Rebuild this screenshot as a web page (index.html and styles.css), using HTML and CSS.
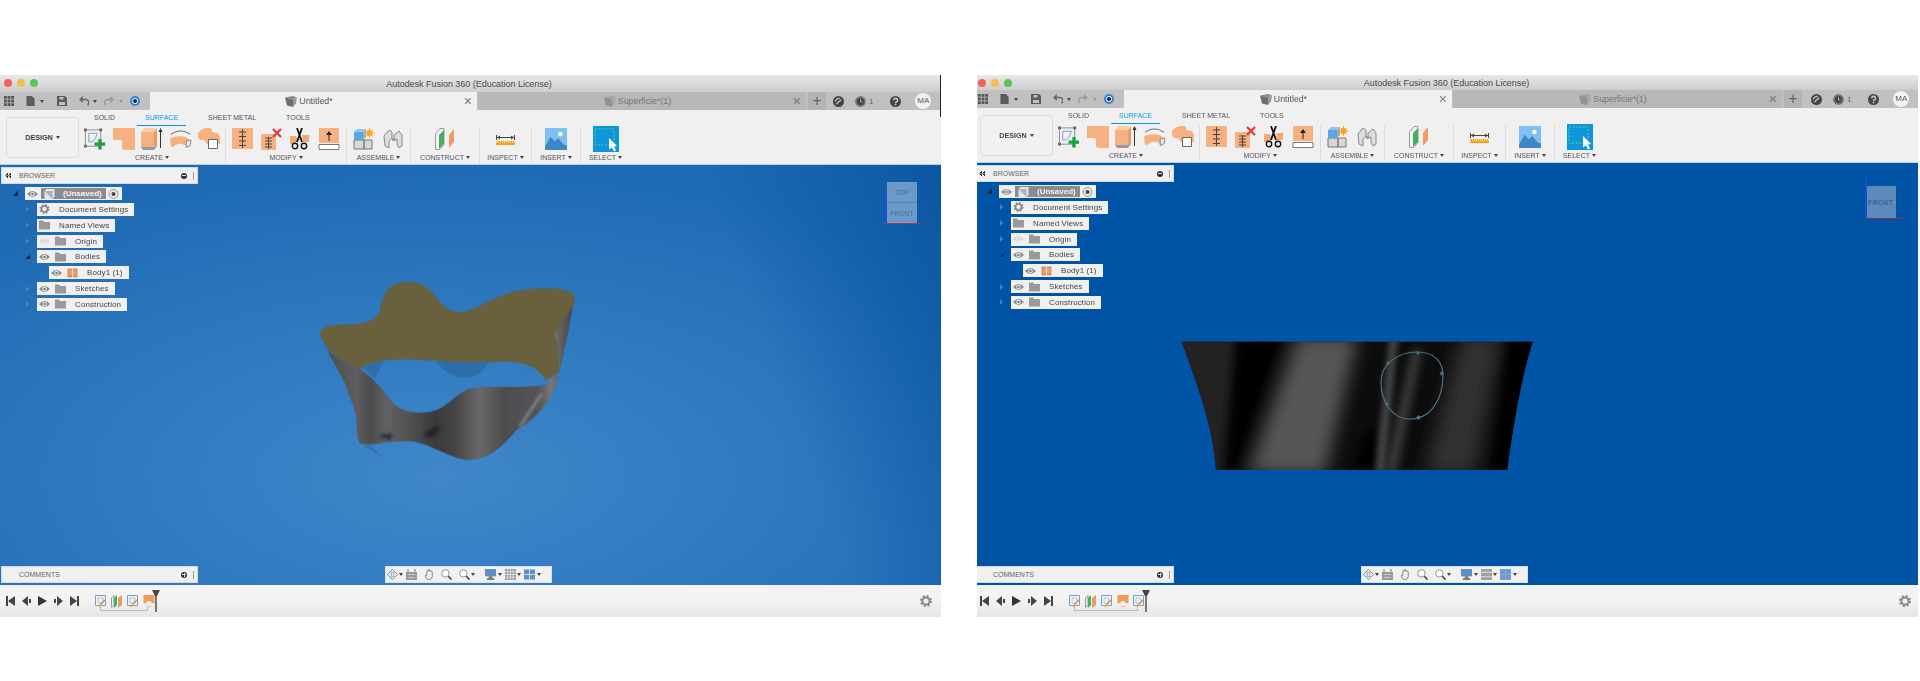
FILE: index.html
```html
<!DOCTYPE html>
<html lang="en">
<head>
<meta charset="utf-8">
<title>Autodesk Fusion 360</title>
<link rel="stylesheet" href="styles.css">
</head>
<body>
<svg class="sprite" aria-hidden="true">
  <symbol id="grid" viewBox="0 0 10 10"><path fill="#555" d="M0 0h2.800v2.800H0zM3.600 0h2.800v2.800H3.600zM7.200 0H10v2.800H7.200zM0 3.600h2.800v2.800H0zM3.600 3.600h2.800v2.800H3.600zM7.200 3.600H10v2.800H7.200zM0 7.200h2.800V10H0zM3.600 7.200h2.800V10H3.600zM7.200 7.200H10V10H7.200z"/></symbol>
  <symbol id="file" viewBox="0 0 10 11"><path fill="#5c5c5c" d="M0 0h6l3 3v8H0z"/></symbol>
  <symbol id="save" viewBox="0 0 10 10"><path fill="#5c5c5c" d="M0 0h8l2 2v8H0z"/><path fill="#c0c0c0" d="M2.500 1h4v2.500h-4zM2 6h6v3H2z"/></symbol>
  <symbol id="undo" viewBox="0 0 10 10"><path fill="none" stroke="#666" stroke-width="1.600" d="M2 3.500h4.500a3 3 0 0 1 2 5.500"/><path fill="#666" d="M3.800 0v7L0 3.500z"/></symbol>
  <symbol id="redo" viewBox="0 0 10 10"><path fill="none" stroke="#999" stroke-width="1.400" d="M8 3.500H4a3 3 0 0 0-2 5.500"/><path fill="#999" d="M6.200 0v7L10 3.500z"/></symbol>
  <symbol id="capture" viewBox="0 0 10 10"><circle cx="5" cy="5" r="5" fill="#2d86dd"/><circle cx="5" cy="5" r="2.900" fill="#eee"/><circle cx="5" cy="5" r="2" fill="#222"/></symbol>
  <symbol id="cube" viewBox="0 0 12 11"><path fill="#8a8a8a" d="M0 1.500 8 0l4 1.500L8 3.500z"/><path fill="#6e6e6e" d="M0 1.500 8 3.500V11L2 9.500z"/><path fill="#9a9a9a" d="m8 3.500 4-2-1 6-3 3.500z"/></symbol>
  <symbol id="clock" viewBox="0 0 10 10"><circle cx="5" cy="5" r="5" fill="#444"/><path fill="none" stroke="#c0c0c0" stroke-width="1.300" d="M7.500 3.500 5 5.500 3 7.500M2.200 5a3 3 0 0 1 4-2.600"/></symbol>
  <symbol id="jobs" viewBox="0 0 11 11"><circle cx="5.500" cy="5.500" r="5.400" fill="#777"/><circle cx="5.500" cy="5.500" r="3.600" fill="#444"/><path stroke="#aaa" d="M5.500 3v3h2" fill="none"/></symbol>
  <symbol id="help" viewBox="0 0 10 10"><circle cx="5" cy="5" r="5" fill="#444"/><path fill="none" stroke="#c8c8c8" stroke-width="1.400" d="M3.300 3.800a1.800 1.700 0 1 1 2.500 1.600C5.200 5.700 5 6 5 6.600"/><path fill="#c8c8c8" d="M4.300 7.200h1.400v1.300H4.300z"/></symbol>
  <symbol id="sketch" viewBox="0 0 23 22"><path fill="none" stroke="#8a8a8a" d="M1.500 1.500h16v17h-16z"/><path fill="#666" d="M0 0h3v3H0zM16 0h3v3h-3zM0 17h3v3H0z"/><path fill="none" stroke="#7aa0c8" d="M5 5h9l-2 5-3 4H5z"/><path fill="#15a13c" d="M15 11h3.400v3.600H22V18h-3.600v4H15v-4h-4v-3.400h4z"/></symbol>
  <symbol id="surf" viewBox="0 0 22 22"><path fill="#f7b080" d="M0 0h22v22H12q-3 0-3-3v-5q0-2-2-2H0z"/></symbol>
  <symbol id="extrude" viewBox="0 0 22 22"><path fill="#f7b080" d="M0 4h13v15H0z"/><path fill="#e59c68" d="m13 4 3-4v16l-3 3z"/><path fill="#fbd0ae" d="M0 4 3 0h13l-3 4z"/><path fill="#9a9a9a" d="M0 19h13l3-3v2l-3 4H2z"/><path stroke="#333" fill="none" d="M19.500 20V1"/><path fill="#333" d="m19.500 0 2 4h-4z"/></symbol>
  <symbol id="sweep" viewBox="0 0 23 22"><path fill="none" stroke="#666" d="M1 6q10-7 20 0"/><path fill="#f7b080" d="M0 11q2-3 11-3 7 0 9 4l-3 7q-2-3-6-3-5 0-7 3H1z"/><path fill="#e8e8e8" stroke="#888" d="m17 13 5-1-1 6-4 2z"/></symbol>
  <symbol id="patch" viewBox="0 0 22 22"><path fill="#f7b080" d="M0 5q3-4 8-5h4q3 1 2 4l6 1 2 4v7H9l-3-4q-5 1-6-3z"/><path fill="#fff" stroke="#666" d="M10.500 11.500h9v9h-9z"/></symbol>
  <symbol id="stitch" viewBox="0 0 22 22"><path fill="#f7b080" d="M0 0h21v21H0z"/><path stroke="#444" d="M10.500 1v19M7 4h7M7 8.500h7M7 13h7M7 17.500h7" fill="none"/></symbol>
  <symbol id="unstitch" viewBox="0 0 22 22"><path fill="#f7b080" d="M0 6h15v16H0z"/><path stroke="#444" d="M4 10h7M4 13h7M4 16h7M4 19h7M7.500 9v12" fill="none"/><path stroke="#e8392f" stroke-width="2.200" d="m12 1 8 8m0-8-8 8"/></symbol>
  <symbol id="scissors" viewBox="0 0 20 22"><path fill="#f3a878" d="M0 8h6l2 4-3 4H0zM12 7h7v7h-6z"/><path stroke="#111" stroke-width="1.800" d="m7 0 5 14M12 0 7 14" fill="none"/><circle cx="5" cy="18" r="2.700" fill="#eee" stroke="#111" stroke-width="1.400"/><circle cx="14" cy="18" r="2.700" fill="#eee" stroke="#111" stroke-width="1.400"/></symbol>
  <symbol id="offset" viewBox="0 0 22 22"><path fill="#f7b080" d="M1 0h20v15H1z"/><path fill="#fff" stroke="#777" d="M1 16.500h20v5H1z"/><path stroke="#222" d="M11 13V5" fill="none"/><path fill="#222" d="m11 3 3 4H8z"/></symbol>
  <symbol id="assemble" viewBox="0 0 22 22"><path fill="#d8d8d8" stroke="#777" d="M1 12h10v9H1zM11 12h8v9h-8z"/><path fill="#5aa6e6" d="M1 4h9v8H1z"/><path fill="#8cc4f0" d="m1 4 3-3h9l-3 3z"/><path fill="#aaa" d="m10 4 3-3v8l-3 3z"/><circle cx="16.500" cy="5" r="3" fill="#f5a623"/><path stroke="#f5a623" d="M16.500 0v10M11.500 5h10M13 1.500l7 7M20 1.500l-7 7" fill="none"/></symbol>
  <symbol id="joint" viewBox="0 0 20 22"><path fill="#ddd" stroke="#888" d="M1 8 6 2l3 2v6l-3 3v7l-4-2z"/><path fill="#ddd" stroke="#888" d="m11 7 5-4 3 4v11l-3 2-2-4v-5l-3 1z"/><path fill="#7aa6d4" d="M9 10h3v3H9z"/></symbol>
  <symbol id="plane" viewBox="0 0 20 22"><path fill="#f4f4f4" stroke="#999" d="M.5 6 5 .5h4v16L4.500 21.500H.5z"/><path fill="#46b060" d="M4 7 9 2v14l-5 5z"/><path fill="#ee9c62" d="m14 7 5-6v13l-5 6z"/></symbol>
  <symbol id="measure" viewBox="0 0 19 11"><path fill="none" stroke="#444" d="M.5 1v5M18.500 1v5M1 3.500h17"/><path fill="#444" d="m1 3.500 3-2v4zM18 3.500l-3-2v4z"/><path fill="#f5a31a" d="M0 7h19v4H0z"/><path stroke="#fff" stroke-dasharray="1 1" d="M0 8h19" fill="none"/></symbol>
  <symbol id="image" viewBox="0 0 20 20"><path fill="#7cc0f5" d="M0 0h20v20H0z"/><circle cx="14" cy="5.500" r="2.200" fill="#fff3c4"/><path fill="#3f87c4" d="m0 17 5-9 4 4 3-3 5 6 3 1v4H0z"/></symbol>
  <symbol id="select" viewBox="0 0 26 26"><path fill="#0c96dc" d="M0 0h26v26H0z"/><path fill="none" stroke="#7fd67a" stroke-width=".8" stroke-dasharray="2 1.500" d="M2 3h19v16H2z"/><path fill="#fff" d="m16 12 8 8-3 .5 2 4-2 1-2-4-3 2z"/></symbol>
  <symbol id="eye" viewBox="0 0 11 7"><path fill="#8c8c8c" d="M0 3.500Q5.500-2.500 11 3.500 5.500 9.500 0 3.500z"/><circle cx="5.500" cy="3.500" r="2.200" fill="#f0f0f0"/><circle cx="5.500" cy="3.500" r="1.200" fill="#777"/></symbol>
  <symbol id="folder" viewBox="0 0 11 9"><path fill="#9a9a9a" d="M0 0h4l1 1.500h6V9H0z"/></symbol>
  <symbol id="gear" viewBox="0 0 12 12"><circle cx="6" cy="6" r="3.600" fill="none" stroke="#888" stroke-width="2"/><circle cx="6" cy="6" r="5" fill="none" stroke="#888" stroke-width="2" stroke-dasharray="2 1.930"/></symbol>
  <symbol id="doc" viewBox="0 0 10 10"><path fill="#dfe6ee" d="M2 0h8v8l-2 2H0V2z"/><path fill="#aab4bf" d="M0 2h8v8"/></symbol>
  <symbol id="radio" viewBox="0 0 10 10"><circle cx="5" cy="5" r="4.500" fill="#e8e8e8" stroke="#999"/><circle cx="5" cy="5" r="2" fill="#444"/></symbol>
  <symbol id="body" viewBox="0 0 11 11"><path fill="#f19c5e" stroke="#a7693e" stroke-width=".6" d="M.5 1h4v9h-4zM6.500 1h4v9h-4z"/><path fill="#ffd2ae" d="M4.500 3h2v4h-2z"/></symbol>
  <symbol id="home" viewBox="0 0 13 13"><path fill="#f4f4f4" stroke="#777" d="m6.500.5 6 6-6 6-6-6z"/><path fill="none" stroke="#6c97c2" d="M5 4h3v5H5z"/></symbol>
  <symbol id="orbit" viewBox="0 0 11 11"><path fill="#999" d="M0 3h11v8H0z"/><path fill="#ccc" d="M2 5h7v1H2zM2 8h7v1H2z"/><path fill="none" stroke="#777" d="M2 3V0M9 3V0"/></symbol>
  <symbol id="hand" viewBox="0 0 11 12"><path fill="#eee" stroke="#666" stroke-width=".8" d="M2.500 7V2.500a.8.8 0 0 1 1.500 0V1a.8.8 0 0 1 1.500 0v1a.8.8 0 0 1 1.500 0v1a.8.8 0 0 1 1.500 0v5q0 3-3 3.500H4Q2 11 .8 7.500q.5-1.500 1.700-.5z"/></symbol>
  <symbol id="zoom" viewBox="0 0 12 12"><circle cx="4.800" cy="4.800" r="4" fill="#fff" stroke="#888"/><path stroke="#333" stroke-width="1.600" d="m8 8 3.500 3.500"/></symbol>
  <symbol id="display" viewBox="0 0 12 12"><path fill="#5f8fc6" d="M0 0h12v8H0z"/><path fill="#777" d="M4 8h4v2h2v2H2v-2h2z"/></symbol>
  <symbol id="gridv" viewBox="0 0 12 12"><path fill="#9a9a9a" d="M0 0h12v12H0z"/><path stroke="#ddd" d="M0 3h12M0 6h12M0 9h12M3 0v12M6 0v12M9 0v12"/></symbol>
  <symbol id="gridb" viewBox="0 0 12 12"><path fill="#a0a0a0" d="M0 0h12v12H0z"/><path fill="#dedede" d="M0 3h12v1H0zM0 8h12v1H0z"/></symbol>
  <symbol id="views" viewBox="0 0 12 11"><path fill="#5f8fc6" d="M0 0h12v11H0z"/><path stroke="#d8e4f0" d="M0 5.500h12M6 0v11"/></symbol>
  <symbol id="views2" viewBox="0 0 12 12"><path fill="#6f9bd0" d="M0 0h12v12H0z"/><path stroke="#86aedb" d="M0 6h12M6 0v12"/></symbol>
  <symbol id="first" viewBox="0 0 9 10"><path fill="#444" d="M0 0h2v10H0zM9 0v10L2 5z"/></symbol>
  <symbol id="prev" viewBox="0 0 9 10"><path fill="#444" d="M6 0v10L0 5zM7 3h2v4H7z"/></symbol>
  <symbol id="play" viewBox="0 0 9 10"><path fill="#333" d="M0 0l9 5-9 5z"/></symbol>
  <symbol id="next" viewBox="0 0 9 10"><path fill="#444" d="M3 0v10l6-5zM0 3h2v4H0z"/></symbol>
  <symbol id="last" viewBox="0 0 9 10"><path fill="#444" d="M7 0h2v10H7zM0 0v10l7-5z"/></symbol>
  <symbol id="tlsketch" viewBox="0 0 12 13"><path fill="#eef3f8" stroke="#7b9fc4" d="M.5.500h10v10H.5z"/><path fill="none" stroke="#8fb0d2" stroke-width=".7" d="M3 3h5v5H3z"/><path stroke="#e88a3a" stroke-width="1.600" d="m5 10 5-5"/><path stroke="#d8c020" stroke-width="1.200" d="m4 12 2-2"/></symbol>
  <symbol id="tlplane" viewBox="0 0 12 13"><path fill="#eee" stroke="#999" d="M.5 3 3 .5v10L.5 12.500z"/><path fill="#46b060" d="m3 3 3-3v10l-3 3z"/><path fill="#ee9c62" d="m7 3 4-3v10l-4 3z"/></symbol>
  <symbol id="tlsurf" viewBox="0 0 12 14"><path fill="#f19c5e" d="M0 0h12v9H9l-1 4H4L3 9H0z"/><circle cx="6" cy="9.500" r="3" fill="#eee"/></symbol>
  <symbol id="marker" viewBox="0 0 8 22"><path fill="#444" d="M0 0h8L5 6H3z"/><path fill="#444" d="M3.300 5h1.400v17H3.300z"/></symbol>
</svg>

<main class="desk">
  <section class="window window-a">
    <header class="titlebar">
      <span class="lights"><i class="light red"></i><i class="light amber"></i><i class="light green"></i></span>
      <span class="title">Autodesk Fusion 360 (Education License)</span>
    </header>
    <nav class="tabbar">
      <div class="qat">
        <svg class="q grid"><use href="#grid"/></svg>
        <svg class="q file"><use href="#file"/></svg><i class="caret q-caret"></i>
        <svg class="q save"><use href="#save"/></svg>
        <svg class="q undo"><use href="#undo"/></svg><i class="caret q-caret"></i>
        <svg class="q redo"><use href="#redo"/></svg><i class="caret q-caret faint"></i>
        <svg class="q capture"><use href="#capture"/></svg>
      </div>
      <div class="tab active"><span class="tab-name"><svg class="tab-cube"><use href="#cube"/></svg>Untitled*</span><span class="close">×</span></div>
      <div class="tab"><span class="tab-name"><svg class="tab-cube faded"><use href="#cube"/></svg>Superficie*(1)</span><span class="close">×</span></div>
      <div class="plus">+</div>
      <div class="account">
        <svg class="acc clock"><use href="#clock"/></svg>
        <svg class="acc jobs"><use href="#jobs"/></svg><span class="job-count">1</span>
        <svg class="acc help"><use href="#help"/></svg>
        <span class="avatar">MA</span>
      </div>
    </nav>
    <div class="toolbar">
      <button class="design">DESIGN<i class="caret"></i></button>
      <div class="ribbon">
        <div class="ribbon-tabs"><span class="rtab">SOLID</span><span class="rtab current">SURFACE</span><span class="rtab">SHEET METAL</span><span class="rtab">TOOLS</span></div>
        <div class="groups">
          <div class="group g-create"><div class="tools"><svg class="tool"><use href="#sketch"/></svg><svg class="tool"><use href="#surf"/></svg><svg class="tool"><use href="#extrude"/></svg><svg class="tool"><use href="#sweep"/></svg><svg class="tool"><use href="#patch"/></svg></div><span class="glabel">CREATE<i class="caret"></i></span></div>
          <div class="group g-modify"><div class="tools"><svg class="tool"><use href="#stitch"/></svg><svg class="tool"><use href="#unstitch"/></svg><svg class="tool"><use href="#scissors"/></svg><svg class="tool"><use href="#offset"/></svg></div><span class="glabel">MODIFY<i class="caret"></i></span></div>
          <div class="group g-assemble"><div class="tools"><svg class="tool"><use href="#assemble"/></svg><svg class="tool"><use href="#joint"/></svg></div><span class="glabel">ASSEMBLE<i class="caret"></i></span></div>
          <div class="group g-construct"><div class="tools"><svg class="tool"><use href="#plane"/></svg></div><span class="glabel">CONSTRUCT<i class="caret"></i></span></div>
          <div class="group g-inspect"><div class="tools"><svg class="tool small"><use href="#measure"/></svg></div><span class="glabel">INSPECT<i class="caret"></i></span></div>
          <div class="group g-insert"><div class="tools"><svg class="tool"><use href="#image"/></svg></div><span class="glabel">INSERT<i class="caret"></i></span></div>
          <div class="group g-select"><div class="tools"><svg class="tool big"><use href="#select"/></svg></div><span class="glabel">SELECT<i class="caret"></i></span></div>
        </div>
      </div>
    </div>
    <div class="canvas canvas-a">
      <svg class="scene" viewBox="0 165 938 420" preserveAspectRatio="none">
        <defs>
          <linearGradient id="band" x1="0" x2="1" y1="0" y2="0">
            <stop offset="0" stop-color="#4e4e50"/><stop offset=".12" stop-color="#5e5e60"/><stop offset=".18" stop-color="#4c4c4e"/><stop offset=".24" stop-color="#626264"/><stop offset=".34" stop-color="#505052"/><stop offset=".44" stop-color="#3a3a3c"/><stop offset=".52" stop-color="#444446"/><stop offset=".62" stop-color="#68686a"/><stop offset=".72" stop-color="#4e4e50"/><stop offset=".86" stop-color="#545456"/><stop offset=".91" stop-color="#78787a"/><stop offset="1" stop-color="#454547"/>
          </linearGradient>
          <filter id="soft" x="-30%" y="-30%" width="160%" height="160%"><feGaussianBlur stdDeviation="5"/></filter>
          <filter id="edge" x="-5%" y="-5%" width="110%" height="110%"><feGaussianBlur stdDeviation="1"/></filter>
        </defs>
        <g transform="translate(300 260) scale(.3333)" filter="url(#edge)">
          <path fill="#2f6ea8" d="M190 322q30-15 60-18l-25 52zM408 304h160q-30 50-70 48-50 2-90-48z"/>
          <path fill="#3674ae" d="M205 555q25 15 45 40-25-20-60-35z"/>
          <path fill="#69603c" d="M60 222C62 200 90 194 130 194 190 192 225 190 240 150 250 100 265 68 320 65 375 65 395 95 420 125 445 155 470 162 510 150 570 128 590 100 680 88 740 82 815 80 825 112 825 150 790 190 775 240L778 335 738 362C720 330 690 312 640 306 570 305 500 306 440 305 380 300 330 296 270 300 225 304 195 312 180 328 140 310 85 290 60 222z"/>
          <path fill="url(#band)" d="M80 265C100 290 140 310 180 328 225 355 255 400 285 435 310 458 380 470 430 440 470 410 490 385 530 382 590 378 690 385 735 375L778 335C782 300 775 260 762 218 785 195 805 165 818 135 810 200 790 290 770 370 745 440 700 480 650 510 600 570 560 600 500 600 440 590 400 555 340 545 290 538 220 558 185 552 170 550 172 520 170 490 170 450 150 420 135 370 115 330 95 300 80 265z"/>
          <g filter="url(#soft)"><path fill="#222224" opacity=".8" d="M235 530q25-15 45-5l-10 15zM370 525q25-30 50-25-5 25-30 35z"/><path stroke="#9a9a9c" stroke-width="6" fill="none" d="M660 500 725 400"/></g>
        </g>
      </svg>
      <div class="panel"><i class="dbl"></i><span class="panel-name">BROWSER</span><i class="minus"></i><i class="grip"></i></div>
      <ul class="tree">
        <li class="node root"><i class="arrow open"></i><div class="chip"><svg class="nic"><use href="#eye"/></svg><span class="root-name"><svg class="nic"><use href="#doc"/></svg><span>(Unsaved)</span></span><svg class="nic"><use href="#radio"/></svg></div></li>
        <li class="node"><i class="arrow"></i><div class="chip"><svg class="nic"><use href="#gear"/></svg><span class="ntext">Document Settings</span></div></li>
        <li class="node"><i class="arrow"></i><div class="chip"><svg class="nic"><use href="#folder"/></svg><span class="ntext">Named Views</span></div></li>
        <li class="node"><i class="arrow"></i><div class="chip"><svg class="nic hidden-eye"><use href="#eye"/></svg><svg class="nic"><use href="#folder"/></svg><span class="ntext">Origin</span></div></li>
        <li class="node"><i class="arrow open"></i><div class="chip"><svg class="nic"><use href="#eye"/></svg><svg class="nic"><use href="#folder"/></svg><span class="ntext">Bodies</span></div></li>
        <li class="node child"><div class="chip"><svg class="nic"><use href="#eye"/></svg><svg class="nic"><use href="#body"/></svg><span class="ntext">Body1 (1)</span></div></li>
        <li class="node"><i class="arrow"></i><div class="chip"><svg class="nic"><use href="#eye"/></svg><svg class="nic"><use href="#folder"/></svg><span class="ntext">Sketches</span></div></li>
        <li class="node"><i class="arrow"></i><div class="chip"><svg class="nic"><use href="#eye"/></svg><svg class="nic"><use href="#folder"/></svg><span class="ntext">Construction</span></div></li>
      </ul>
      <div class="panel comments"><span class="panel-name">COMMENTS</span><i class="minus add"></i><i class="grip"></i></div>
      <div class="viewcube vc-a"><span class="face">TOP</span><span class="face">FRONT</span><i class="axis-z"></i><i class="axis-x"></i></div>
      <div class="navbar nav-a">
        <svg class="nv"><use href="#home"/></svg><i class="caret"></i><svg class="nv"><use href="#orbit"/></svg><svg class="nv sp"><use href="#hand"/></svg><svg class="nv sp"><use href="#zoom"/></svg><svg class="nv sp"><use href="#zoom"/></svg><i class="caret"></i><svg class="nv wide"><use href="#display"/></svg><i class="caret"></i><svg class="nv"><use href="#gridv"/></svg><i class="caret"></i><svg class="nv"><use href="#views"/></svg><i class="caret"></i>
      </div>
    </div>
    <footer class="timeline">
      <svg class="ctl"><use href="#first"/></svg><svg class="ctl"><use href="#prev"/></svg><svg class="ctl"><use href="#play"/></svg><svg class="ctl"><use href="#next"/></svg><svg class="ctl"><use href="#last"/></svg>
      <div class="steps"><svg class="step"><use href="#tlsketch"/></svg><svg class="step"><use href="#tlplane"/></svg><svg class="step"><use href="#tlsketch"/></svg><svg class="step"><use href="#tlsurf"/></svg><svg class="marker"><use href="#marker"/></svg></div>
      <svg class="tl-gear"><use href="#gear"/></svg>
    </footer>
  </section>

  <section class="window window-b">
    <header class="titlebar">
      <span class="lights"><i class="light red"></i><i class="light amber"></i><i class="light green"></i></span>
      <span class="title">Autodesk Fusion 360 (Education License)</span>
    </header>
    <nav class="tabbar">
      <div class="qat">
        <svg class="q grid"><use href="#grid"/></svg>
        <svg class="q file"><use href="#file"/></svg><i class="caret q-caret"></i>
        <svg class="q save"><use href="#save"/></svg>
        <svg class="q undo"><use href="#undo"/></svg><i class="caret q-caret"></i>
        <svg class="q redo"><use href="#redo"/></svg><i class="caret q-caret faint"></i>
        <svg class="q capture"><use href="#capture"/></svg>
      </div>
      <div class="tab active"><span class="tab-name"><svg class="tab-cube"><use href="#cube"/></svg>Untitled*</span><span class="close">×</span></div>
      <div class="tab"><span class="tab-name"><svg class="tab-cube faded"><use href="#cube"/></svg>Superficie*(1)</span><span class="close">×</span></div>
      <div class="plus">+</div>
      <div class="account">
        <svg class="acc clock"><use href="#clock"/></svg>
        <svg class="acc jobs"><use href="#jobs"/></svg><span class="job-count">1</span>
        <svg class="acc help"><use href="#help"/></svg>
        <span class="avatar">MA</span>
      </div>
    </nav>
    <div class="toolbar">
      <button class="design">DESIGN<i class="caret"></i></button>
      <div class="ribbon">
        <div class="ribbon-tabs"><span class="rtab">SOLID</span><span class="rtab current">SURFACE</span><span class="rtab">SHEET METAL</span><span class="rtab">TOOLS</span></div>
        <div class="groups">
          <div class="group g-create"><div class="tools"><svg class="tool"><use href="#sketch"/></svg><svg class="tool"><use href="#surf"/></svg><svg class="tool"><use href="#extrude"/></svg><svg class="tool"><use href="#sweep"/></svg><svg class="tool"><use href="#patch"/></svg></div><span class="glabel">CREATE<i class="caret"></i></span></div>
          <div class="group g-modify"><div class="tools"><svg class="tool"><use href="#stitch"/></svg><svg class="tool"><use href="#unstitch"/></svg><svg class="tool"><use href="#scissors"/></svg><svg class="tool"><use href="#offset"/></svg></div><span class="glabel">MODIFY<i class="caret"></i></span></div>
          <div class="group g-assemble"><div class="tools"><svg class="tool"><use href="#assemble"/></svg><svg class="tool"><use href="#joint"/></svg></div><span class="glabel">ASSEMBLE<i class="caret"></i></span></div>
          <div class="group g-construct"><div class="tools"><svg class="tool"><use href="#plane"/></svg></div><span class="glabel">CONSTRUCT<i class="caret"></i></span></div>
          <div class="group g-inspect"><div class="tools"><svg class="tool small"><use href="#measure"/></svg></div><span class="glabel">INSPECT<i class="caret"></i></span></div>
          <div class="group g-insert"><div class="tools"><svg class="tool"><use href="#image"/></svg></div><span class="glabel">INSERT<i class="caret"></i></span></div>
          <div class="group g-select"><div class="tools"><svg class="tool big"><use href="#select"/></svg></div><span class="glabel">SELECT<i class="caret"></i></span></div>
        </div>
      </div>
    </div>
    <div class="canvas canvas-b">
      <svg class="scene" viewBox="971 163 947 422" preserveAspectRatio="none">
        <defs>
          <clipPath id="trap"><path d="M1181.700 341.700H1532.700C1522 375 1513 425 1507.300 470H1216C1213 430 1203 400 1181.700 341.700z"/></clipPath>
          <filter id="b4" x="-50%" width="200%"><feGaussianBlur stdDeviation="4"/></filter>
          <filter id="b8" x="-50%" width="200%"><feGaussianBlur stdDeviation="9"/></filter>
          <filter id="b2" x="-100%" width="300%"><feGaussianBlur stdDeviation="3"/></filter>
        </defs>
        <g clip-path="url(#trap)">
          <path fill="#0c0c0c" d="M1170 330h380v150h-380z"/>
          <path fill="#232323" filter="url(#b4)" d="M1175 335h60l-14 140h-25z"/>
          <path fill="#000" filter="url(#b4)" d="M1240 335h42l-46 140h-8z"/>
          <path fill="#575757" filter="url(#b8)" d="M1298 335h60l-33 140h-78z"/>
          <path fill="#000" filter="url(#b4)" d="M1362 440q8-20 14-6l6 42h-30z"/>
          <path fill="#484848" filter="url(#b2)" d="M1390 335h8l-14 140h-9z"/>
          <path fill="#3a3a3a" filter="url(#b4)" d="M1412 350h10l-26 125h-12z"/>
          <path fill="#333" filter="url(#b8)" d="M1462 335h40l-28 140h-50z"/>
          <path fill="#000" filter="url(#b4)" d="M1510 335h30l-20 140h-30z"/>
          <path fill="none" stroke="#4d7083" stroke-width="1.200" d="M1418 352C1434 352 1443 362 1443 375 1443 398 1432 419 1410 419 1392 419 1381 402 1381 382 1381 365 1396 352 1418 352z"/>
          <path fill="#4d7083" d="M1417 351l3 2-2 2-2-2zM1441 371l3 2-2 3-2-2zM1418 415l3 2-2 3-3-2zM1387 402l2 2-2 2-2-2zM1388 361l2 2-2 2-2-2z"/>
        </g>
      </svg>
      <div class="panel"><i class="dbl"></i><span class="panel-name">BROWSER</span><i class="minus"></i><i class="grip"></i></div>
      <ul class="tree">
        <li class="node root"><i class="arrow open"></i><div class="chip"><svg class="nic"><use href="#eye"/></svg><span class="root-name"><svg class="nic"><use href="#doc"/></svg><span>(Unsaved)</span></span><svg class="nic"><use href="#radio"/></svg></div></li>
        <li class="node"><i class="arrow"></i><div class="chip"><svg class="nic"><use href="#gear"/></svg><span class="ntext">Document Settings</span></div></li>
        <li class="node"><i class="arrow"></i><div class="chip"><svg class="nic"><use href="#folder"/></svg><span class="ntext">Named Views</span></div></li>
        <li class="node"><i class="arrow"></i><div class="chip"><svg class="nic hidden-eye"><use href="#eye"/></svg><svg class="nic"><use href="#folder"/></svg><span class="ntext">Origin</span></div></li>
        <li class="node"><i class="arrow open"></i><div class="chip"><svg class="nic"><use href="#eye"/></svg><svg class="nic"><use href="#folder"/></svg><span class="ntext">Bodies</span></div></li>
        <li class="node child"><div class="chip"><svg class="nic"><use href="#eye"/></svg><svg class="nic"><use href="#body"/></svg><span class="ntext">Body1 (1)</span></div></li>
        <li class="node"><i class="arrow"></i><div class="chip"><svg class="nic"><use href="#eye"/></svg><svg class="nic"><use href="#folder"/></svg><span class="ntext">Sketches</span></div></li>
        <li class="node"><i class="arrow"></i><div class="chip"><svg class="nic"><use href="#eye"/></svg><svg class="nic"><use href="#folder"/></svg><span class="ntext">Construction</span></div></li>
      </ul>
      <div class="panel comments"><span class="panel-name">COMMENTS</span><i class="minus add"></i><i class="grip"></i></div>
      <div class="viewcube vc-b"><span class="face solo">FRONT</span><i class="axis-z"></i><i class="axis-x"></i></div>
      <div class="navbar nav-b">
        <svg class="nv"><use href="#home"/></svg><i class="caret"></i><svg class="nv"><use href="#orbit"/></svg><svg class="nv sp"><use href="#hand"/></svg><svg class="nv sp"><use href="#zoom"/></svg><svg class="nv sp"><use href="#zoom"/></svg><i class="caret"></i><svg class="nv wide"><use href="#display"/></svg><i class="caret"></i><svg class="nv"><use href="#gridb"/></svg><i class="caret"></i><svg class="nv"><use href="#views2"/></svg><i class="caret"></i>
      </div>
    </div>
    <footer class="timeline">
      <svg class="ctl"><use href="#first"/></svg><svg class="ctl"><use href="#prev"/></svg><svg class="ctl"><use href="#play"/></svg><svg class="ctl"><use href="#next"/></svg><svg class="ctl"><use href="#last"/></svg>
      <div class="steps five"><svg class="step"><use href="#tlsketch"/></svg><svg class="step"><use href="#tlplane"/></svg><svg class="step"><use href="#tlsketch"/></svg><svg class="step"><use href="#tlsurf"/></svg><svg class="step"><use href="#tlsketch"/></svg><svg class="marker"><use href="#marker"/></svg></div>
      <svg class="tl-gear"><use href="#gear"/></svg>
    </footer>
  </section>
</main>
</body>
</html>
```
FILE: styles.css
```css
* { box-sizing: border-box; }
html, body { margin: 0; height: 100%; }
body { background: #fff; overflow: hidden; font-family: "Liberation Sans", Arial, sans-serif; color: #444; }
i { display: block; font-style: normal; }
.sprite { position: absolute; width: 0; height: 0; }

.desk { display: flex; gap: 30px; height: 681px; padding-top: 75px; margin-left: -3px; }
.window { display: flex; flex-direction: column; height: 542px; flex: none; position: relative; }
.window-a { width: 944px; }
.window-b { width: 947px; clip-path: inset(0 0 0 6px); }
.window-a::after { content: ""; position: absolute; right: 0; top: 0; width: 1px; height: 42px; background: #222; }

.titlebar { display: flex; align-items: center; position: relative; justify-content: center; background: linear-gradient(#e8e8e8, #cdcdcd); flex: none; }
.window-a .titlebar { height: 17px; }
.window-b .titlebar { height: 15px; padding-left: 4px; }
.lights { position: absolute; left: 7px; top: 0; bottom: 0; display: flex; align-items: center; gap: 5px; }
.window-a .lights { top: -2px; bottom: auto; height: 19px; }
.light { width: 8px; height: 8px; border-radius: 50%; }
.red { background: #f0625a; }
.amber { background: #f5bc4f; }
.green { background: #5cc558; }
.title { font-size: 9px; letter-spacing: -.03px; color: #4a4a4a; }

.tabbar { display: flex; height: 18px; background: #c0c0c0; flex: none; align-items: stretch; }
.qat { width: 153px; flex: none; display: flex; align-items: center; padding-left: 7px; }
.q { width: 10px; height: 10px; flex: none; }
.file { margin-left: 12px; }
.save { margin-left: 13px; }
.undo { margin-left: 12px; }
.redo { margin-left: 7px; }
.capture { margin-left: 7px; }
.caret { width: 0; height: 0; border: 2.500px solid transparent; border-top: 3px solid #444; border-bottom: 0; display: inline-block; margin-left: 3px; vertical-align: 1px; flex: none; }
.q-caret { margin-left: 4px; }
.faint { border-top-color: #999; margin-left: 5px; }

.tab { width: 328px; flex: none; display: grid; grid-template-columns: 1fr auto; position: relative; align-items: center; justify-items: center; background: #b8b8b8; color: #777; font-size: 8.800px; padding-right: 9px; }
.tab.active { background: #f0f0f0; color: #555; width: 327px; margin-right: 1px; }
.window-b .tab { width: 329px; }
.window-b .tab.active { width: 328px; }
.tab-name { display: flex; align-items: center; gap: 2px; }
.tab-cube { width: 12px; height: 11px; }
.faded { opacity: .5; }
.close { position: absolute; right: 5px; top: 1px; font-size: 14px; line-height: 16px; color: #777; font-weight: 400; }
.plus { width: 18px; margin-left: 2px; background: #b4b4b4; color: #666; font-size: 16px; line-height: 17px; text-align: center; flex: none; }
.account { display: flex; align-items: center; padding-left: 7px; flex: 1; }
.window-b .account { padding-left: 9px; }
.acc { flex: none; }
.clock { width: 11px; height: 11px; }
.jobs { width: 11px; height: 11px; margin-left: 11px; }
.job-count { font-size: 8px; margin-left: 3px; color: #666; }
.help { width: 11px; height: 11px; margin-left: 17px; }
.avatar { width: 16px; height: 16px; margin-left: 14px; border-radius: 50%; background: #f2f2f2; font-size: 8px; letter-spacing: .2px; line-height: 16px; text-align: center; color: #555; flex: none; }

.toolbar { display: flex; background: #f0f0f0; flex: none; align-items: flex-start; border-bottom: 1px solid #b9cfe4; height: 55px; }
.design { margin: 7px 0 0 9px; width: 73px; height: 41px; border: 1px solid #dcdcdc; border-radius: 4px; background: #f1f1f1; color: #444; font: 700 7.200px "Liberation Sans", Arial, sans-serif; padding: 0; }
.ribbon { display: flex; flex-direction: column; }
.ribbon-tabs { display: flex; gap: 14px; padding-left: 7px; height: 16px; }
.rtab { font-size: 7px; padding: 4px 8px 0; height: 16px; color: #555; white-space: nowrap; }
.rtab.current { color: #1199dd; border-bottom: 1.500px solid #0696d7; }
.groups { display: flex; }
.group { display: flex; flex-direction: column; align-items: center; height: 36px; border-right: 1px solid #dcdcdc; margin-top: 1px; }
.g-create { width: 147px; }
.g-modify { width: 121px; }
.g-assemble { width: 64px; }
.g-construct { width: 69px; }
.g-inspect { width: 52px; }
.g-insert { width: 49px; }
.g-select { width: 49px; border-right: 0; }
.tools { display: flex; gap: 6.500px; height: 24px; align-items: center; flex: none; }
.tool { width: 22px; height: 22px; }
.tool.small { width: 19px; height: 11px; }
.tool.big { width: 26px; height: 26px; }
.glabel { font-size: 7px; color: #555; margin-top: 1px; white-space: nowrap; line-height: 11px; }
.glabel .caret { margin-left: 2px; }

.canvas { flex: 1; position: relative; display: flex; flex-direction: column; padding: 2px 0 2px 4px; overflow: hidden; }
.canvas-a { background: radial-gradient(ellipse 72% 75% at 47% 74%, #3f87ca 0, #2f79bf 50%, #1e6ab3 100%), #1e6ab3; }
.canvas-a::before { content: ""; position: absolute; inset: 0; background: linear-gradient(250deg, #0c57a3 0, rgba(12, 87, 163, 0) 22%); }
.canvas-b { background: #0054a6; }
.scene { position: absolute; inset: 0; width: 100%; height: 100%; }
.canvas-a .scene { left: 3px; width: 938px; }

.panel { position: relative; flex: none; display: flex; align-items: center; width: 197px; height: 17px; background: #f0f0f0; border: 1px solid #cfdbe8; font-size: 7px; color: #555; padding: 0 3px; }
.canvas-b .panel { width: 199px; }
.dbl { width: 6px; height: 5px; background: linear-gradient(135deg, transparent 50%, #333 50%) 0 0/3px 2.500px no-repeat, linear-gradient(45deg, transparent 50%, #333 50%) 0 100%/3px 2.500px no-repeat, linear-gradient(135deg, transparent 50%, #333 50%) 3px 0/3px 2.500px no-repeat, linear-gradient(45deg, transparent 50%, #333 50%) 3px 100%/3px 2.500px no-repeat; }
.panel-name { margin-left: 8px; color: #666; }
.comments .panel-name { margin-left: 14px; }
.minus { margin-left: auto; width: 6px; height: 6px; border-radius: 50%; background: #333; position: relative; }
.minus::after { content: ""; position: absolute; left: 1px; right: 1px; top: 2.500px; height: 1px; background: #ddd; }
.add::before { content: ""; position: absolute; top: 1px; bottom: 1px; left: 2.500px; width: 1px; background: #ddd; }
.grip { width: 1px; height: 8px; background: #999; margin: 0 0 0 6px; }
.comments { margin-top: auto; }

.tree { position: relative; list-style: none; margin: 3px 0 0; padding: 0; display: flex; flex-direction: column; gap: 2.850px; font-size: 8px; color: #444; }
.node { display: flex; align-items: center; height: 13px; margin-left: 24px; }
.node.root { margin-left: 12px; }
.node.child { margin-left: 48px; }
.arrow { width: 12px; flex: none; }
.arrow::before { content: ""; display: block; margin-left: 1px; width: 0; height: 0; border: 3px solid transparent; border-left: 3px solid #5d7f9f; border-right: 0; }
.arrow.open::before { border: 0; margin-left: 0; width: 5px; height: 5px; background: linear-gradient(135deg, transparent 50%, #1a2b3c 50%); }
.chip { height: 13px; display: flex; align-items: center; gap: 5px; background: #f0f0f0; padding: 0 6px 0 2px; white-space: nowrap; }
.nic { width: 11px; height: 10px; flex: none; }
.ntext { margin-left: 4px; letter-spacing: .1px; }
.hidden-eye { opacity: .25; }
.root-name { display: flex; align-items: center; width: 65px; height: 11px; margin-left: -2px; background: #8c8c8c; color: #f4f4f4; font-weight: 700; padding-left: 3px; gap: 8px; }
.node.root .chip { padding-right: 3px; }
.node.root .chip > .nic:last-child { margin-left: -3px; }

.viewcube { position: absolute; display: flex; flex-direction: column; align-items: center; color: #4d6c8e; font-size: 6.500px; letter-spacing: .2px; }
.face { flex: 1; width: 100%; display: flex; align-items: center; justify-content: center; background: #6a9ac9; }
.face + .face { border-top: 1px solid #5b83ad; }
.vc-a { left: 890px; top: 17px; width: 30px; height: 41px; }
.vc-b { left: 894px; top: 23px; width: 31px; height: 32px; }
.vc-b .face { background: #5c8abb; }
.solo { font-weight: 700; font-size: 7px; color: #44648a; }
.axis-z { position: absolute; left: -3px; top: 10px; bottom: -1px; width: 1.500px; background: #1a4fd0; }
.axis-x { position: absolute; left: -2px; right: -5px; bottom: -1px; height: 1.500px; background: #b03050; }
.vc-b .axis-z { left: 0; top: -8px; }
.vc-b .axis-x { left: 0; right: -9px; background: #8b2f4a; }

.navbar { position: absolute; bottom: 2px; height: 17px; width: 167px; background: #f1f1f1; border: 1px solid #d5e0ea; display: flex; align-items: center; padding-left: .5px; }
.nav-a { left: 388px; }
.nav-b { left: 390px; }
.nv { width: 11px; height: 11px; flex: none; }
.nv.sp { margin-left: 6.500px; }
.nv.wide { margin-left: 7px; }
.navbar .caret { margin: 0 3px 0 1.500px; }

.timeline { height: 32px; flex: none; display: flex; align-items: center; padding-left: 9px; gap: 7px; background: linear-gradient(#f3f3f3 45%, #e6e6e6 100%); }
.ctl { width: 9px; height: 10px; flex: none; }
.steps { display: flex; gap: 4px; margin-left: 9px; position: relative; align-items: center; height: 20px; }
.step { width: 12px; height: 13px; flex: none; }
.steps::after { content: ""; position: absolute; left: 5px; width: 46px; bottom: 0; height: 4px; border: 1px solid #bbb; border-top: 0; }
.steps.five::after { width: 62px; }
.marker { width: 8px; height: 22px; margin-left: -7px; flex: none; }
.tl-gear { width: 12px; height: 12px; margin-left: auto; margin-right: 9px; flex: none; }
.window-b .tl-gear { margin-right: 7px; }
```
